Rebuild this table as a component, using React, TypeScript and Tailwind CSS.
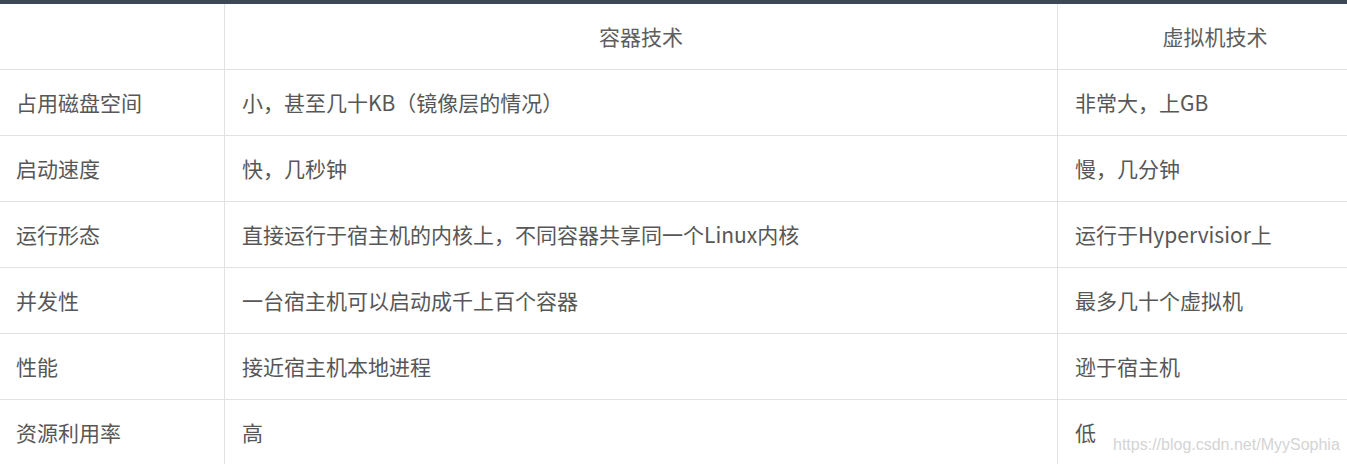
const rows: [string, string, string][] = [
  ["占用磁盘空间", "小，甚至几十KB（镜像层的情况）", "非常大，上GB"],
  ["启动速度", "快，几秒钟", "慢，几分钟"],
  ["运行形态", "直接运行于宿主机的内核上，不同容器共享同一个Linux内核", "运行于Hypervisior上"],
  ["并发性", "一台宿主机可以启动成千上百个容器", "最多几十个虚拟机"],
  ["性能", "接近宿主机本地进程", "逊于宿主机"],
  ["资源利用率", "高", "低"],
];

const font = { fontFamily: '"Noto Sans CJK SC", "Noto Sans", sans-serif' };

const App = () => {
  return (
    <div className="relative h-[464px] w-[1347px] overflow-hidden bg-white" style={font}>
      <div className="h-[4px] bg-[#3d4857]" />
      <div className="w-[1380px]">
        <div className="flex h-[66px] border-b border-[#e2e2e2] text-[21px] text-[#5e5e5e]">
          <div className="w-[225px] border-r border-[#e2e2e2]" />
          <div className="flex w-[833px] items-center justify-center border-r border-[#e2e2e2]">容器技术</div>
          <div className="flex w-[314px] items-center justify-center">虚拟机技术</div>
        </div>
        {rows.map((r, i) => (
          <div key={i} className="flex h-[66px] border-b border-[#e2e2e2] text-[21px] text-[#575757]">
            <div className="flex w-[225px] items-center border-r border-[#e2e2e2] pl-[16px]">{r[0]}</div>
            <div className="flex w-[833px] items-center border-r border-[#e2e2e2] pl-[17px]">{r[1]}</div>
            <div className="flex w-[314px] items-center pl-[17px]">{r[2]}</div>
          </div>
        ))}
      </div>
      <div
        className="absolute left-[1113px] top-[433px] whitespace-nowrap text-[16px] text-[#d4d4d4]"
        style={{ fontFamily: '"Liberation Sans", Arial, sans-serif' }}
      >
        https://blog.csdn.net/MyySophia
      </div>
    </div>
  );
};

export default App;
